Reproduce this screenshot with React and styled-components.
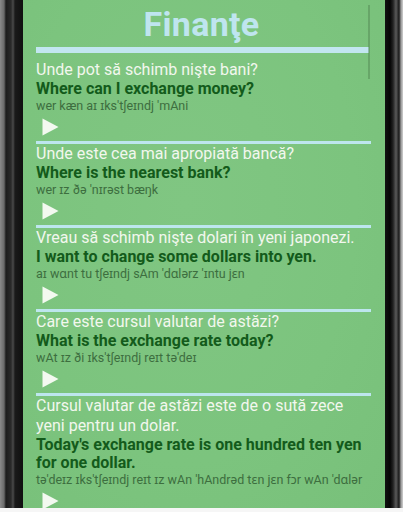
import React from 'react'
import styled, { createGlobalStyle } from 'styled-components'

const GlobalStyle = createGlobalStyle`
  html, body { margin: 0; padding: 0; background: #f6f6f6; }
  body { font-family: Roboto, 'Noto Sans', sans-serif; }
`

const Device = styled.div`
  width: 403px;
  height: 508px;
  display: flex;
  background: linear-gradient(90deg,
    #8a8a8a 0px, #6a6a6a 4px, #1c1c1c 6px, #2a2a2a 11px, #4a4a4a 13px,
    #1a1a1a 15px, #111 22px, #111 385px, #050505 390px, #222 393px,
    #5a5a5a 396px, #1a1a1a 399px, #9a9a9a 401px, #cfcfcf 403px);
  padding: 0 18px 0 23px;
  box-sizing: border-box;
  overflow: hidden;
`

const Screen = styled.div`
  position: relative;
  flex: 1;
  background: radial-gradient(ellipse at 45% 40%, #80c682 0%, #7cc47e 60%, #78c07a 100%);
  padding: 0 14px 0 13px;
  overflow: hidden;
`

const ScrollThumb = styled.div`
  position: absolute;
  top: 5px;
  right: 15px;
  width: 2px;
  height: 74px;
  background: rgba(80, 130, 80, 0.45);
`

const Title = styled.h1`
  margin: 0;
  padding-top: 5px;
  text-align: center;
  font-family: Roboto, sans-serif;
  font-weight: 700;
  font-size: 34px;
  line-height: 39px;
  color: #bfe5ef;
  letter-spacing: 0.3px;
  padding-right: 4px;
`

const TitleBar = styled.div`
  height: 6px;
  margin: 3px 2px 0 0;
  background: #c2e6f0;
`

const List = styled.div`
  display: flex;
  flex-direction: column;
`

const Entry = styled.div`
  padding-top: ${(p) => (p.first ? '7px' : '0')};
  border-bottom: ${(p) => (p.last ? 'none' : '3px solid #bde6ee')};
`

const Native = styled.div`
  font-size: 16px;
  line-height: 20px;
  color: #f2f7ee;
`

const English = styled.div`
  font-size: 16px;
  font-weight: 700;
  line-height: 18px;
  color: #135b1b;
`

const Ipa = styled.div`
  font-size: 12.5px;
  line-height: 16px;
  color: #3d6e3f;
`

const PlayButton = styled.button`
  display: block;
  margin: 4px 0 5px 6px;
  padding: 0;
  border: none;
  background: none;
  width: 17px;
  height: 18px;
  cursor: pointer;
`

const Play = () => (
  <PlayButton aria-label="play">
    <svg width="17" height="18" viewBox="0 0 17 18">
      <polygon points="0.5,0.5 16.5,9 0.5,17.5" fill="#f3f9f0" />
    </svg>
  </PlayButton>
)

const phrases = [
  {
    ro: 'Unde pot să schimb nişte bani?',
    en: 'Where can I exchange money?',
    ipa: "wer kæn aɪ ɪks'tʃeɪndj 'mAni",
  },
  {
    ro: 'Unde este cea mai apropiată bancă?',
    en: 'Where is the nearest bank?',
    ipa: "wer ɪz ðə 'nɪrəst bæŋk",
  },
  {
    ro: 'Vreau să schimb nişte dolari în yeni japonezi.',
    en: 'I want to change some dollars into yen.',
    ipa: "aɪ wɑnt tu tʃeɪndj sAm 'dɑlərz 'ɪntu jɛn",
  },
  {
    ro: 'Care este cursul valutar de astăzi?',
    en: 'What is the exchange rate today?',
    ipa: "wAt ɪz ði ɪks'tʃeɪndj reɪt tə'deɪ",
  },
  {
    ro: 'Cursul valutar de astăzi este de o sută zece yeni pentru un dolar.',
    en: "Today's exchange rate is one hundred ten yen for one dollar.",
    ipa: "tə'deɪz ɪks'tʃeɪndj reɪt ɪz wAn 'hAndrəd tɛn jɛn fɔr wAn 'dɑlər",
  },
]

export default function App() {
  return (
    <>
      <GlobalStyle />
      <Device>
        <Screen>
          <ScrollThumb />
          <Title>Finanţe</Title>
          <TitleBar />
          <List>
            {phrases.map((p, i) => (
              <Entry key={i} first={i === 0} last={i === phrases.length - 1}>
                <Native>{p.ro}</Native>
                <English>{p.en}</English>
                <Ipa>{p.ipa}</Ipa>
                <Play />
              </Entry>
            ))}
          </List>
        </Screen>
      </Device>
    </>
  )
}
